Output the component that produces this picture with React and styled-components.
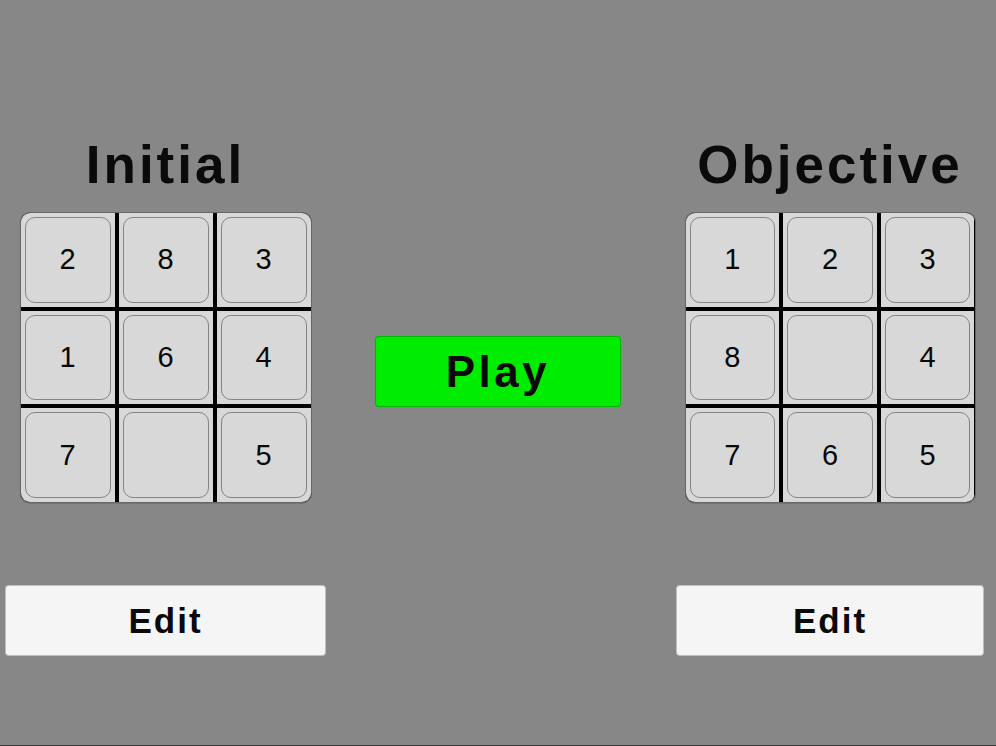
import React from 'react';
import styled, { createGlobalStyle } from 'styled-components';

const GlobalStyle = createGlobalStyle`
  html, body {
    margin: 0;
    padding: 0;
    background: #878787;
  }
  * {
    box-sizing: border-box;
  }
`;

const S = {
  Screen: styled.div`
    width: 996px;
    height: 746px;
    background: #878787;
    border-bottom: 1px solid #3a3a3a;
    display: grid;
    grid-template-columns: 321px 1fr 308px;
    padding: 0 12px 0 5px;
    font-family: 'Liberation Sans', Arial, sans-serif;
    overflow: hidden;
  `,
  Side: styled.div`
    display: flex;
    flex-direction: column;
    align-items: center;
    padding-top: 138px;
  `,
  Middle: styled.div`
    display: flex;
    justify-content: center;
    padding-top: 336px;
    padding-right: 6px;
  `,
  Title: styled.h1`
    margin: 0 0 21px;
    font-size: 53px;
    line-height: 1;
    font-weight: bold;
    letter-spacing: 3px;
    color: #0a0a0a;
    height: 53px;
  `,
  Board: styled.div`
    width: ${(p) => p.$width}px;
    height: 291px;
    display: grid;
    grid-template-columns: repeat(3, 1fr);
    grid-template-rows: repeat(3, 1fr);
    gap: 4px;
    background: #000;
    border: 1px solid #666;
    border-radius: 10px;
    overflow: hidden;
    box-shadow: 0 1px 1px rgba(0, 0, 0, 0.15);
  `,
  Cell: styled.div`
    background: #d8d8d8;
    padding: 4px;
    display: flex;
  `,
  Tile: styled.div`
    flex: 1;
    display: flex;
    align-items: center;
    justify-content: center;
    background: #d8d8d8;
    border: 1px solid #848484;
    border-radius: 10px;
    font-size: 29px;
    color: #080808;
    line-height: 1;
  `,
  Button: styled.button`
    width: ${(p) => p.$width}px;
    height: 71px;
    margin-top: ${(p) => p.$top || 0}px;
    display: flex;
    align-items: center;
    justify-content: center;
    padding: 0;
    background: ${(p) => (p.$green ? '#00ec00' : '#f5f5f5')};
    border: 1px solid rgba(0, 0, 0, 0.22);
    border-radius: 4px;
    font-family: 'Liberation Sans', Arial, sans-serif;
    font-weight: bold;
    font-size: ${(p) => p.$size}px;
    letter-spacing: ${(p) => p.$spacing}px;
    line-height: 1;
    color: #0a0a0a;
    cursor: pointer;
  `,
};

const initial = [2, 8, 3, 1, 6, 4, 7, null, 5];
const objective = [1, 2, 3, 8, null, 4, 7, 6, 5];

function Board({ tiles, width }) {
  return (
    <S.Board $width={width}>
      {tiles.map((n, i) => (
        <S.Cell key={i}>
          <S.Tile>{n}</S.Tile>
        </S.Cell>
      ))}
    </S.Board>
  );
}

export default function App() {
  return (
    <>
      <GlobalStyle />
      <S.Screen>
        <S.Side>
          <S.Title>Initial</S.Title>
          <Board tiles={initial} width={292} />
          <S.Button $width={321} $top={82} $size={35} $spacing={2}>
            Edit
          </S.Button>
        </S.Side>
        <S.Middle>
          <S.Button $green $width={246} $size={44} $spacing={3.5}>
            Play
          </S.Button>
        </S.Middle>
        <S.Side>
          <S.Title>Objective</S.Title>
          <Board tiles={objective} width={291} />
          <S.Button $width={308} $top={82} $size={35} $spacing={2}>
            Edit
          </S.Button>
        </S.Side>
      </S.Screen>
    </>
  );
}
